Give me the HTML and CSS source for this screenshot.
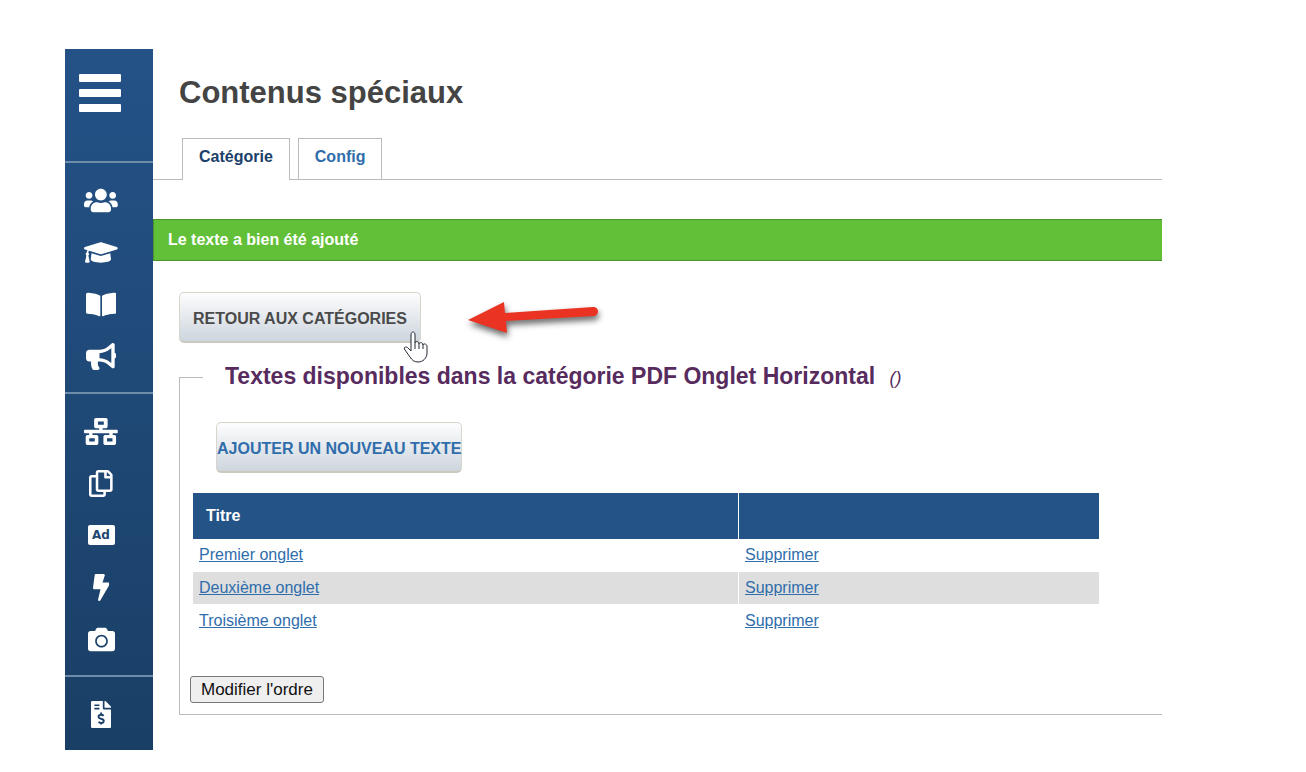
FILE: index.html
```html
<!DOCTYPE html>
<html lang="fr">
<head>
<meta charset="utf-8">
<title>Contenus spéciaux</title>
<link rel="stylesheet" href="styles.css">
</head>
<body>
<div class="app">
  <nav class="sidebar" aria-label="Navigation principale">
    <div class="sidebar-head">
      <button class="burger" type="button" aria-label="Menu"><span></span><span></span><span></span></button>
    </div>
    <div class="nav-group">
      <a class="nav-item" href="#" aria-label="Utilisateurs"><svg class="icon" viewBox="0 0 640 512"><path d="M96 224c35.3 0 64-28.7 64-64s-28.7-64-64-64-64 28.7-64 64 28.7 64 64 64zm448 0c35.3 0 64-28.7 64-64s-28.7-64-64-64-64 28.7-64 64 28.7 64 64 64zm32 32h-64c-17.6 0-33.5 7.1-45.1 18.6 40.3 22.1 68.9 62 75.1 109.4h66c17.7 0 32-14.3 32-32v-32c0-35.3-28.7-64-64-64zm-256 0c61.9 0 112-50.1 112-112S381.9 32 320 32 208 82.1 208 144s50.1 112 112 112zm76.8 32h-8.3c-20.8 10-43.9 16-68.5 16s-47.6-6-68.5-16h-8.3C179.6 288 128 339.6 128 403.2V432c0 26.5 21.5 48 48 48h288c26.5 0 48-21.5 48-48v-28.8c0-63.6-51.6-115.2-115.2-115.2zm-223.7-13.4C161.5 263.1 145.6 256 128 256H64c-35.3 0-64 28.7-64 64v32c0 17.7 14.3 32 32 32h65.9c6.3-47.4 34.9-87.3 75.2-109.4z"/></svg></a>
      <a class="nav-item" href="#" aria-label="Formations"><svg class="icon" viewBox="0 0 640 512"><path d="M622.34 153.2L343.4 67.5c-15.2-4.67-31.6-4.67-46.79 0L17.66 153.2c-23.54 7.23-23.54 38.36 0 45.59l48.63 14.94c-10.67 13.19-17.23 29.28-17.88 46.9C38.78 266.15 32 276.11 32 288c0 10.78 5.68 19.85 13.86 25.65L20.33 428.53C18.11 438.52 25.71 448 35.94 448h56.11c10.24 0 17.84-9.48 15.62-19.47L82.14 313.65C90.32 307.85 96 298.78 96 288c0-11.57-6.47-21.25-15.66-26.87.76-15.02 8.44-28.3 20.69-36.72L296.6 284.5c9.06 2.78 26.44 6.25 46.79 0l278.95-85.7c23.55-7.24 23.55-38.36 0-45.6zM352.79 315.09c-28.53 8.76-52.84 3.92-65.59 0l-145.02-44.55L128 384c0 35.35 85.96 64 192 64s192-28.65 192-64l-14.18-113.47-145.03 44.56z"/></svg></a>
      <a class="nav-item" href="#" aria-label="Catalogue"><svg class="icon" viewBox="0 0 576 512"><path d="M542.22 32.05c-54.8 3.11-163.72 14.43-230.96 55.59-4.64 2.84-7.27 7.89-7.27 13.17v363.87c0 11.55 12.63 18.85 23.28 13.49 69.18-34.82 169.23-44.32 218.7-46.92 16.89-.89 30.02-14.43 30.02-30.66V62.75c.01-17.71-15.35-31.74-33.77-30.7zM264.73 87.64C197.5 46.48 88.58 35.17 33.78 32.05 15.36 31.01 0 45.04 0 62.75V400.6c0 16.24 13.13 29.78 30.02 30.66 49.49 2.6 149.59 12.11 218.77 46.95 10.62 5.35 23.21-1.94 23.21-13.46V100.63c0-5.29-2.62-10.14-7.27-12.99z"/></svg></a>
      <a class="nav-item" href="#" aria-label="Communication"><svg class="icon" viewBox="0 0 576 512"><path d="M576 240c0-23.63-12.95-44.04-32-55.12V32.01C544 23.26 537.02 0 512 0c-7.12 0-14.19 2.38-19.98 7.02l-85.03 68.03C364.28 109.19 310.66 128 256 128H64c-35.35 0-64 28.65-64 64v96c0 35.35 28.65 64 64 64h33.7c-1.39 10.48-2.18 21.14-2.18 32 0 39.77 9.26 77.35 25.56 110.94 5.19 10.69 16.52 17.06 28.4 17.06h74.28c26.05 0 41.69-29.84 25.9-50.56-16.4-21.52-26.15-48.36-26.15-77.44 0-11.11 1.62-21.79 4.41-32H256c54.66 0 108.28 18.81 150.98 52.95l85.03 68.03a32.023 32.023 0 0 0 19.98 7.02c24.92 0 32-22.78 32-32V295.13C563.05 284.04 576 263.63 576 240zm-96 141.42l-33.05-26.44C392.95 311.78 325.12 288 256 288v-96c69.12 0 136.95-23.78 190.95-66.98L480 98.58v282.84z"/></svg></a>
    </div>
    <div class="nav-group">
      <a class="nav-item" href="#" aria-label="Arborescence"><svg class="icon" viewBox="0 0 640 512"><path fill-rule="evenodd" d="M224 0h192a32 32 0 0 1 32 32v128a32 32 0 0 1-32 32h-64v32h272a16 16 0 0 1 16 16v32a16 16 0 0 1-16 16h-80v32h32a32 32 0 0 1 32 32v128a32 32 0 0 1-32 32H400a32 32 0 0 1-32-32V352a32 32 0 0 1 32-32h80v-32H160v32h80a32 32 0 0 1 32 32v128a32 32 0 0 1-32 32H64a32 32 0 0 1-32-32V352a32 32 0 0 1 32-32h32v-32H16a16 16 0 0 1-16-16v-32a16 16 0 0 1 16-16h272v-32h-64a32 32 0 0 1-32-32V32a32 32 0 0 1 32-32zM264 66v60h112V66zM100 386v60h104v-60zM436 386v60h104v-60z"/></svg></a>
      <a class="nav-item" href="#" aria-label="Pages"><svg class="icon" viewBox="0 0 448 512"><path d="M433.941 65.941l-51.882-51.882A48 48 0 0 0 348.118 0H176c-26.51 0-48 21.49-48 48v48H48c-26.51 0-48 21.49-48 48v320c0 26.51 21.49 48 48 48h224c26.51 0 48-21.49 48-48v-48h80c26.51 0 48-21.49 48-48V99.882a48 48 0 0 0-14.059-33.941zM266 464H54a6 6 0 0 1-6-6V150a6 6 0 0 1 6-6h74v224c0 26.51 21.49 48 48 48h96v42a6 6 0 0 1-6 6zm128-96H182a6 6 0 0 1-6-6V54a6 6 0 0 1 6-6h106v88c0 13.255 10.745 24 24 24h88v202a6 6 0 0 1-6 6zm6-256h-64V48h9.632c1.591 0 3.117.632 4.243 1.757l48.368 48.368a6 6 0 0 1 1.757 4.243V112z"/></svg></a>
      <a class="nav-item" href="#" aria-label="Publicités"><span class="ad-badge">Ad</span></a>
      <a class="nav-item" href="#" aria-label="Actions rapides"><svg class="icon" viewBox="0 0 320 512"><path d="M296 160H180.6l42.6-129.8C227.2 15 215.7 0 200 0H56C44 0 33.8 8.9 32.2 20.8l-32 240C-1.7 275.2 9.5 288 24 288h118.7L96.6 482.5c-3.6 15.2 8 29.5 23.3 29.5 8.4 0 16.4-4.4 20.8-12l176-304c9.3-15.9-2.2-36-20.7-36z"/></svg></a>
      <a class="nav-item" href="#" aria-label="Photos"><svg class="icon" viewBox="0 0 512 512"><path d="M512 144v288c0 26.5-21.5 48-48 48H48c-26.5 0-48-21.5-48-48V144c0-26.5 21.5-48 48-48h88l12.3-32.9c7-18.7 24.9-31.1 44.9-31.1h125.5c20 0 37.9 12.4 44.9 31.1L376 96h88c26.5 0 48 21.5 48 48zM376 288c0-66.2-53.8-120-120-120s-120 53.8-120 120 53.8 120 120 120 120-53.8 120-120zm-32 0c0 48.5-39.5 88-88 88s-88-39.5-88-88 39.5-88 88-88 88 39.5 88 88z"/></svg></a>
    </div>
    <div class="nav-group">
      <a class="nav-item" href="#" aria-label="Factures"><svg class="icon" viewBox="0 0 384 512"><path fill-rule="evenodd" d="M24 0h200v136a24 24 0 0 0 24 24h136v328a24 24 0 0 1-24 24H24a24 24 0 0 1-24-24V24A24 24 0 0 1 24 0zM64 64v32h96V64zM64 128v32h96v-32z"/><path d="M256 0h7a24 24 0 0 1 17 7l97 98a24 24 0 0 1 7 17v6H256z"/><path class="dollar" d="M192 220v36m0 152v36m48-164c-14-16-30-20-50-20-60 0-60 62-10 74l24 8c54 14 50 74-8 74-22 0-42-8-54-22"/></svg></a>
    </div>
  </nav>

  <main class="main">
    <h1 class="title">Contenus spéciaux</h1>
    <div class="tabs">
      <a class="tab tab-active" href="#">Catégorie</a>
      <a class="tab" href="#">Config</a>
    </div>
    <p class="alert" role="status">Le texte a bien été ajouté</p>

    <div class="content">
      <div class="back-row">
        <div class="back-wrap">
          <button class="btn btn-back" type="button">RETOUR AUX CATÉGORIES</button>
          <svg class="cursor" width="26" height="33" viewBox="0 0 26 33" aria-hidden="true"><path d="M8 20V4c0-4 4-4 4 0v8c0-2 4-2 4 1 0-2 4-2 4 1 0-2 4-1 4 1v7c0 5-4 9-9 9-4 0-6-2-8-5l-5-7c-2-3 1-4 3-2zM12 12v6M16 13v5M20 14v4"/></svg>
        </div>
        <svg class="arrow" width="140" height="50" viewBox="0 0 140 50" aria-hidden="true"><path d="M2 28L38 10l1 11 88-6a4 4 0 0 1 1 9l-88 5 1 12z"/></svg>
      </div>

      <fieldset class="panel">
        <legend class="panel-title">Textes disponibles dans la catégorie PDF Onglet Horizontal <em class="panel-code">()</em></legend>
        <button class="btn btn-add" type="button">AJOUTER UN NOUVEAU TEXTE</button>
        <table class="list">
          <thead>
            <tr><th class="col-title" scope="col">Titre</th><th></th></tr>
          </thead>
          <tbody>
            <tr><td><a href="#">Premier onglet</a></td><td><a href="#">Supprimer</a></td></tr>
            <tr><td><a href="#">Deuxième onglet</a></td><td><a href="#">Supprimer</a></td></tr>
            <tr><td><a href="#">Troisième onglet</a></td><td><a href="#">Supprimer</a></td></tr>
          </tbody>
        </table>
        <button class="order" type="button">Modifier l'ordre</button>
      </fieldset>
    </div>
  </main>
</div>
</body>
</html>
```
FILE: styles.css
```css
* {
  box-sizing: border-box;
}

body {
  margin: 0;
  background: #fff;
  color: #444;
  font-family: "Liberation Sans", Arial, sans-serif;
  font-size: 16px;
  line-height: 20px;
}

.app {
  display: flex;
  padding: 49px 144px 21px 65px;
}

/* Sidebar */
.sidebar {
  flex: none;
  width: 88px;
  background: linear-gradient(#245287, #1a3f66);
}

.sidebar-head {
  height: 112px;
  padding: 25px 14px 0;
}

.burger {
  display: flex;
  flex-direction: column;
  gap: 7px;
  width: 42px;
  padding: 0;
  border: 0;
  background: none;
}

.burger span {
  height: 8px;
  border-radius: 1px;
  background: #fff;
}

.nav-group {
  padding: 11px 0 10px;
  border-top: 2px solid #6d8daa;
}

.nav-item {
  display: flex;
  align-items: center;
  justify-content: center;
  height: 52px;
  padding-right: 16px;
  text-decoration: none;
}

.icon {
  height: 27px;
  fill: #fff;
}

.dollar {
  fill: none;
  stroke: #1b4069;
  stroke-width: 36;
}

.ad-badge {
  width: 27px;
  border-radius: 2px;
  background: #fff;
  color: #1e4872;
  font: bold 12px/20px "DejaVu Sans", sans-serif;
  text-align: center;
}

/* Main column */
.main {
  flex: 1;
  min-width: 0;
}

.title {
  margin: 0;
  padding: 26px 26px 27px;
  font-size: 31px;
  line-height: 36px;
}

.tabs {
  display: flex;
  gap: 8px;
  padding-left: 29px;
  border-bottom: 1px solid #bbb;
}

.tab {
  padding: 8px 16px 12px;
  border: 1px solid #bbb;
  border-bottom: 0;
  color: #2f6dab;
  font-weight: bold;
  text-decoration: none;
}

.tab-active {
  margin-bottom: -1px;
  background: #fff;
  color: #1b4069;
}

.alert {
  margin: 39px 0 31px;
  padding: 10px 14px;
  border: 1px solid #4b912c;
  border-right: 0;
  background: #62c038;
  color: #fff;
  font-weight: bold;
}

.content {
  padding-left: 26px;
}

.btn {
  display: block;
  height: 51px;
  padding: 4px 0 0;
  border: 1px solid #d8d5cc;
  border-bottom: 2px solid #ccc8bc;
  border-radius: 5px;
  background: linear-gradient(#fdfdfd, #cdd5de);
  font: bold 16px/20px "Liberation Sans", Arial, sans-serif;
  white-space: nowrap;
}

.back-row {
  display: flex;
  gap: 45px;
  height: 51px;
}

.back-wrap {
  position: relative;
}

.btn-back {
  padding: 4px 13px 0;
  color: #4a4a4a;
}

.cursor {
  position: absolute;
  right: -8px;
  bottom: -21px;
  fill: #fff;
  stroke: #222833;
  stroke-width: 1;
}

.arrow {
  fill: #ea3323;
  filter: drop-shadow(1px 4px 3px #0009);
}

/* Category panel */
.panel {
  min-width: 0;
  margin: 19px 0 0;
  padding: 30px 0 11px 10px;
  border: 1px solid #bbb;
  border-right: 0;
}

.panel-title {
  width: 100%;
  margin-left: 13px;
  padding: 0 0 0 22px;
  color: #572b5e;
  font-size: 23px;
  font-weight: bold;
  line-height: 28px;
}

.panel-code {
  margin-left: 8px;
  font-size: 18px;
  font-weight: normal;
}

.btn-add {
  margin: 0 0 20px 26px;
  color: #2f6dab;
}

.list {
  width: calc(100% - 66px);
  margin: 0 0 38px 3px;
  border-spacing: 0;
  table-layout: fixed;
}

.list th {
  height: 46px;
  padding: 0 13px;
  background: #245387;
  color: #fff;
  text-align: left;
}

.col-title {
  width: 545px;
}

.list td {
  height: 33px;
  padding: 0 6px;
  border-bottom: 1px solid #fff;
}

.list th + th,
.list td + td {
  border-left: 1px solid #fff;
}

.list tbody tr:nth-child(even) td {
  background: #dedede;
}

.list a {
  color: #2f6dab;
}

.order {
  display: block;
  height: 27px;
  padding: 0 10px;
  border: 1px solid #777;
  border-radius: 3px;
  background: #efefef;
  color: #111;
  font: 17px/20px "Liberation Sans", Arial, sans-serif;
}
```
